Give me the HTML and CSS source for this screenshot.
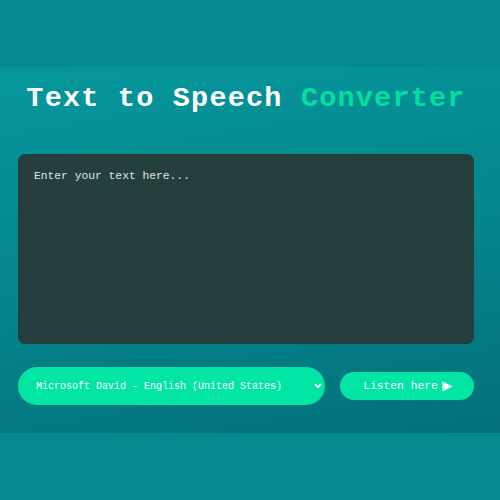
FILE: index.html
```html
<!DOCTYPE html>
<html>
<head>
<meta charset="utf-8">
<link rel="stylesheet" href="styles.css">
</head>
<body>
<main class="hero">
  <h1 class="title">Text to Speech <span class="accent">Converter</span></h1>
  <textarea class="input" placeholder="Enter your text here..."></textarea>
  <div class="row">
    <div class="select-wrap">
      <select class="voice">
        <option>Microsoft David - English (United States)</option>
      </select>
      <svg class="chev" width="8" height="6" viewBox="0 0 8 6"><path d="M1 1.2 L4 4.2 L7 1.2" fill="none" stroke="#fff" stroke-width="1.8"/></svg>
    </div>
    <button class="listen">Listen here<svg class="play" width="11" height="11" viewBox="0 0 11 11"><path d="M0.5 0.5 L10.5 5.5 L0.5 10.5 Z" fill="#fff"/></svg></button>
  </div>
</main>
</body>
</html>
```
FILE: styles.css
```css
html, body {
  margin: 0;
  padding: 0;
}
body {
  background: #04898f;
  height: 500px;
  display: flex;
  align-items: center;
  font-family: "Liberation Mono", "Courier New", monospace;
}
.hero {
  width: 100%;
  height: 366px;
  box-sizing: border-box;
  padding: 15.5px 26px 0 18px;
  background: linear-gradient(170deg, #05979c 0%, #04868d 50%, #037079 100%);
}
.title {
  margin: 0;
  font-size: 28.5px;
  line-height: 32px;
  font-weight: bold;
  letter-spacing: 1.2px;
  color: #ffffff;
  text-align: center;
}
.accent {
  color: #02e0a0;
}
.input {
  display: block;
  box-sizing: border-box;
  width: 100%;
  height: 190px;
  margin-top: 39.5px;
  border: none;
  border-radius: 7px;
  background: #253f3f;
  padding: 16px;
  font-family: "Liberation Mono", "Courier New", monospace;
  font-size: 11.3px;
  color: #fff;
  resize: none;
  outline: none;
}
.input::placeholder {
  color: #dfe6e6;
  opacity: 1;
}
.row {
  display: flex;
  align-items: center;
  gap: 15px;
  margin-top: 23px;
}
.select-wrap {
  position: relative;
  width: 307px;
  height: 38px;
}
.voice {
  appearance: none;
  -webkit-appearance: none;
  width: 100%;
  height: 100%;
  border: none;
  border-radius: 19px;
  background: #02e5a4;
  color: #fff;
  font-family: "Liberation Mono", "Courier New", monospace;
  font-size: 10px;
  padding: 0 0 0 18px;
  outline: none;
}
.chev {
  position: absolute;
  top: 16px;
  right: 3px;
}
.listen {
  width: 134px;
  height: 28px;
  border: none;
  border-radius: 14px;
  background: #02e5a4;
  color: #fff;
  font-family: "Liberation Mono", "Courier New", monospace;
  font-size: 11.3px;
  display: flex;
  align-items: center;
  justify-content: center;
  gap: 4px;
  padding: 0 0 0 2px;
}
.play {
  display: block;
}
```
